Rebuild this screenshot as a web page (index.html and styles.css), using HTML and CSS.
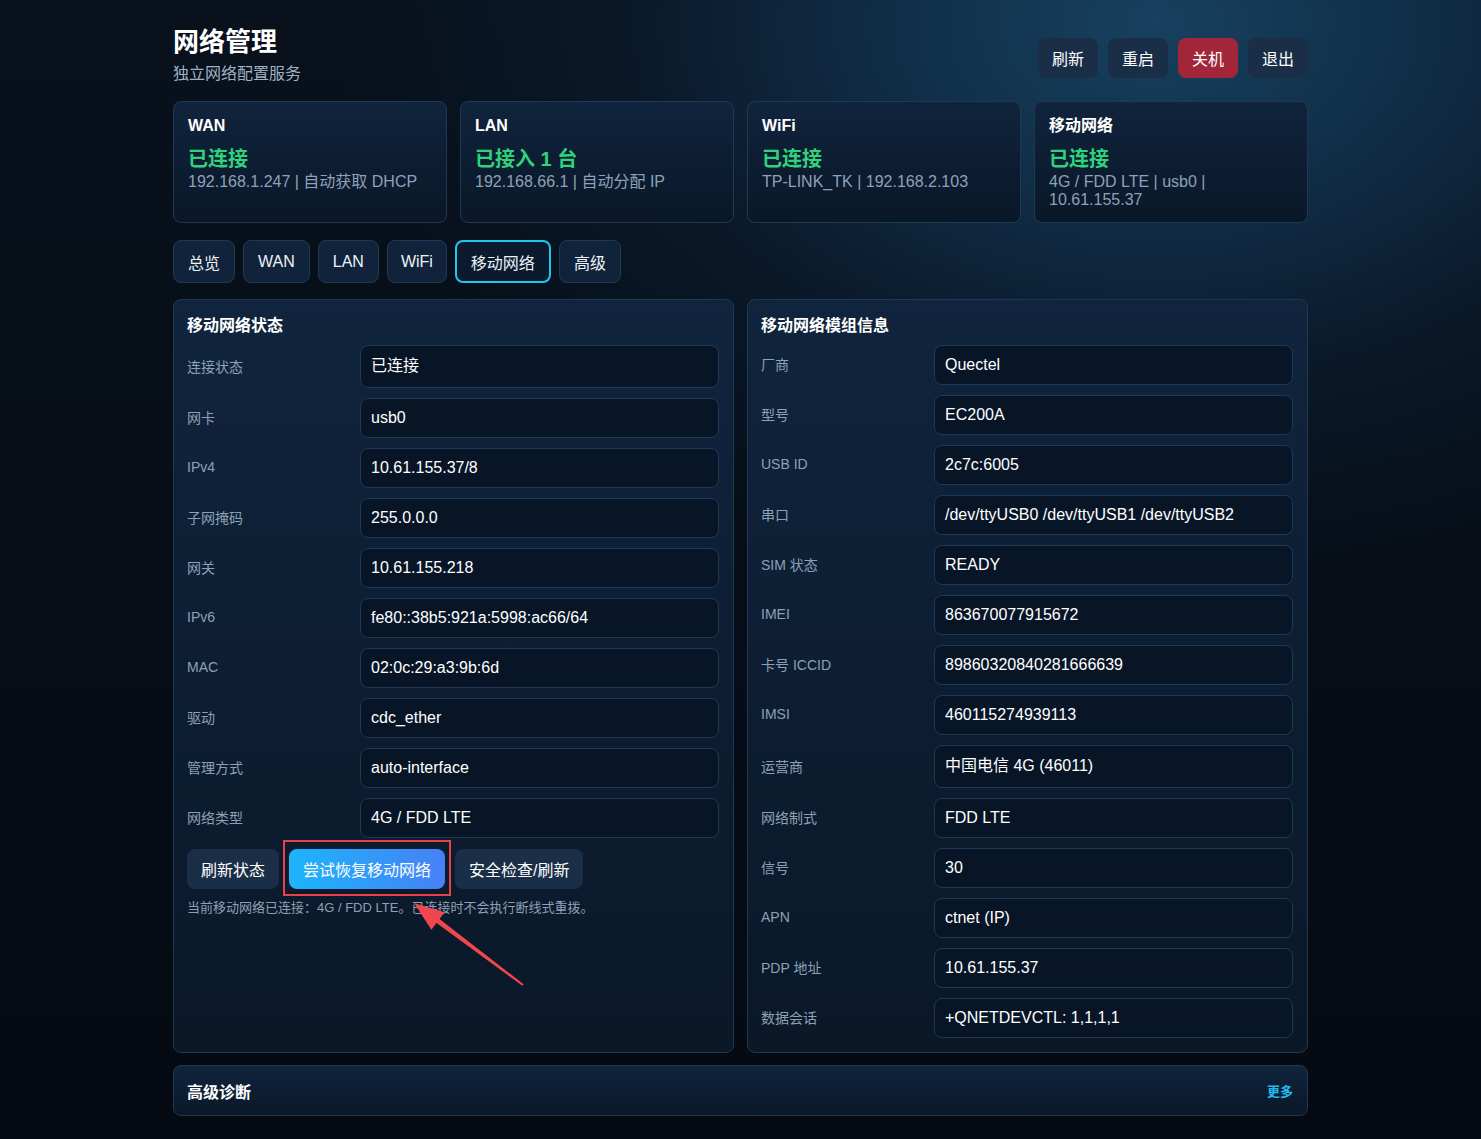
FILE: index.html
```html
<!DOCTYPE html>
<html lang="zh-CN">
<head>
<meta charset="utf-8">
<title>网络管理</title>
<link rel="stylesheet" href="styles.css">
</head>
<body>
<div class="page">
  <header class="header">
    <div class="brand">
      <h1 class="title">网络管理</h1>
      <div class="subtitle">独立网络配置服务</div>
    </div>
    <div class="actions">
      <button class="hbtn">刷新</button>
      <button class="hbtn">重启</button>
      <button class="hbtn danger">关机</button>
      <button class="hbtn">退出</button>
    </div>
  </header>

  <section class="cards">
    <div class="card">
      <div class="card-title">WAN</div>
      <div class="card-status">已连接</div>
      <div class="card-detail">192.168.1.247 | 自动获取 DHCP</div>
    </div>
    <div class="card">
      <div class="card-title">LAN</div>
      <div class="card-status">已接入 1 台</div>
      <div class="card-detail">192.168.66.1 | 自动分配 IP</div>
    </div>
    <div class="card">
      <div class="card-title">WiFi</div>
      <div class="card-status">已连接</div>
      <div class="card-detail">TP-LINK_TK | 192.168.2.103</div>
    </div>
    <div class="card">
      <div class="card-title">移动网络</div>
      <div class="card-status">已连接</div>
      <div class="card-detail">4G / FDD LTE | usb0 |<br>10.61.155.37</div>
    </div>
  </section>

  <nav class="tabs">
    <button class="tab">总览</button>
    <button class="tab">WAN</button>
    <button class="tab">LAN</button>
    <button class="tab narrow">WiFi</button>
    <button class="tab active">移动网络</button>
    <button class="tab">高级</button>
  </nav>

  <section class="panels">
    <div class="panel left-panel">
      <h2 class="panel-title">移动网络状态</h2>
      <div class="rows">
        <div class="row"><div class="label">连接状态</div><div class="value cjk">已连接</div></div>
        <div class="row"><div class="label">网卡</div><div class="value">usb0</div></div>
        <div class="row"><div class="label">IPv4</div><div class="value">10.61.155.37/8</div></div>
        <div class="row"><div class="label">子网掩码</div><div class="value">255.0.0.0</div></div>
        <div class="row"><div class="label">网关</div><div class="value">10.61.155.218</div></div>
        <div class="row"><div class="label">IPv6</div><div class="value">fe80::38b5:921a:5998:ac66/64</div></div>
        <div class="row"><div class="label">MAC</div><div class="value">02:0c:29:a3:9b:6d</div></div>
        <div class="row"><div class="label">驱动</div><div class="value">cdc_ether</div></div>
        <div class="row"><div class="label">管理方式</div><div class="value">auto-interface</div></div>
        <div class="row"><div class="label">网络类型</div><div class="value">4G / FDD LTE</div></div>
      </div>
      <div class="btn-row">
        <button class="pbtn">刷新状态</button>
        <span class="highlight">
          <button class="pbtn primary">尝试恢复移动网络</button>
          <span class="mark"></span>
        </span>
        <button class="pbtn">安全检查/刷新</button>
      </div>
      <p class="hint">当前移动网络已连接：4G / FDD LTE。已连接时不会执行断线式重拨。</p>
      <svg class="arrow" width="130" height="100" viewBox="400 895 130 100">
        <polygon points="437.9,917.8 523.6,984.2 522.4,985.8 434.9,921.8" fill="#f0474f"/>
        <polygon points="414,903 444.6,912.2 431.4,929.8" fill="#f0474f"/>
      </svg>
    </div>

    <div class="panel">
      <h2 class="panel-title">移动网络模组信息</h2>
      <div class="rows">
        <div class="row"><div class="label">厂商</div><div class="value">Quectel</div></div>
        <div class="row"><div class="label">型号</div><div class="value">EC200A</div></div>
        <div class="row"><div class="label">USB ID</div><div class="value">2c7c:6005</div></div>
        <div class="row"><div class="label">串口</div><div class="value">/dev/ttyUSB0 /dev/ttyUSB1 /dev/ttyUSB2</div></div>
        <div class="row"><div class="label">SIM 状态</div><div class="value">READY</div></div>
        <div class="row"><div class="label">IMEI</div><div class="value">863670077915672</div></div>
        <div class="row"><div class="label">卡号 ICCID</div><div class="value">89860320840281666639</div></div>
        <div class="row"><div class="label">IMSI</div><div class="value">460115274939113</div></div>
        <div class="row"><div class="label">运营商</div><div class="value cjk">中国电信 4G (46011)</div></div>
        <div class="row"><div class="label">网络制式</div><div class="value">FDD LTE</div></div>
        <div class="row"><div class="label">信号</div><div class="value">30</div></div>
        <div class="row"><div class="label">APN</div><div class="value">ctnet (IP)</div></div>
        <div class="row"><div class="label">PDP 地址</div><div class="value">10.61.155.37</div></div>
        <div class="row"><div class="label">数据会话</div><div class="value">+QNETDEVCTL: 1,1,1,1</div></div>
      </div>
    </div>
  </section>

  <section class="diag">
    <h2 class="diag-title">高级诊断</h2>
    <a class="more">更多</a>
  </section>
</div>
</body>
</html>
```

FILE: styles.css
```css
* { box-sizing: border-box; }

html, body {
  margin: 0;
  padding: 0;
  height: 100%;
}

body {
  font-family: "Liberation Sans", "Noto Sans CJK SC", sans-serif;
  color: #eef3f8;
  background-color: #050a12;
  background-image:
    radial-gradient(ellipse 820px 560px at 78% 2%, #17415f 0%, #102c45 35%, #0a1828 65%, rgba(6, 12, 21, 0) 100%),
    linear-gradient(180deg, #08111c 0%, #050a12 100%);
  background-repeat: no-repeat;
  overflow: hidden;
}

.page {
  width: 1135px;
  margin: 0 auto;
  padding-top: 25px;
}

button {
  font-family: inherit;
  cursor: pointer;
}

/* header */
.header {
  display: flex;
  justify-content: space-between;
  align-items: flex-start;
}

.title {
  margin: 0;
  font-size: 26px;
  font-weight: 700;
  line-height: 34px;
  color: #ffffff;
}

.subtitle {
  margin-top: 4px;
  font-size: 16px;
  line-height: 22px;
  color: #9fb1c4;
}

.actions {
  display: flex;
  gap: 10px;
  margin-top: 13px;
}

.hbtn {
  width: 60px;
  height: 40px;
  border: none;
  border-radius: 8px;
  background: #1a2e48;
  color: #ffffff;
  font-size: 16px;
}

.hbtn.danger {
  background: #a2263a;
}

/* status cards */
.cards {
  display: grid;
  grid-template-columns: repeat(4, 1fr);
  gap: 13px;
  margin-top: 16px;
}

.card {
  min-height: 122px;
  padding: 13px 14px;
  border: 1px solid #1f3853;
  border-radius: 8px;
  background: linear-gradient(180deg, #10243d 0%, #0a1728 100%);
}

.card-title {
  font-size: 16px;
  font-weight: 700;
  line-height: 22px;
  color: #ffffff;
}

.card-status {
  margin-top: 10px;
  font-size: 20px;
  font-weight: 700;
  line-height: 24px;
  color: #2fd37c;
}

.card-detail {
  margin-top: 2px;
  font-size: 16px;
  line-height: 18px;
  color: #8da2b8;
}

/* tabs */
.tabs {
  display: flex;
  gap: 8px;
  margin-top: 17px;
}

.tab {
  height: 43px;
  padding: 0 14px;
  border: 1px solid #203a55;
  border-radius: 8px;
  background: #11233a;
  color: #edf2f8;
  font-size: 16px;
}

.tab.narrow {
  padding: 0 13px;
}

.tab.active {
  border: 2px solid #1fc6ef;
  padding: 0 14px;
  background: #0b1a2c;
}

/* panels */
.panels {
  display: grid;
  grid-template-columns: 1fr 1fr;
  gap: 13px;
  margin-top: 16px;
}

.panel {
  position: relative;
  padding: 15px 14px 14px 13px;
  border: 1px solid #1f3853;
  border-radius: 8px;
  background: linear-gradient(180deg, #10243d 0%, #0a1828 100%);
}

.panel-title {
  margin: 0 0 8px;
  font-size: 16px;
  font-weight: 700;
  line-height: 22px;
  color: #ffffff;
}

.rows {
  display: flex;
  flex-direction: column;
  gap: 10px;
}

.row {
  display: grid;
  grid-template-columns: 173px 1fr;
  align-items: center;
}

.label {
  font-size: 14px;
  color: #8ca1b6;
  padding-bottom: 2px;
}

.value {
  padding: 10px 10px;
  border: 1px solid #1f3853;
  border-radius: 8px;
  background: #081527;
  font-size: 16px;
  line-height: 18px;
  color: #ffffff;
}

.value.cjk {
  padding-top: 11px;
  padding-bottom: 12px;
}

/* left panel actions */
.btn-row {
  display: flex;
  align-items: center;
  gap: 10px;
  margin-top: 11px;
}

.pbtn {
  height: 40px;
  padding: 0 14px;
  border: none;
  border-radius: 8px;
  background: #1a2e48;
  color: #ffffff;
  font-size: 16px;
}

.pbtn.primary {
  padding: 0 14px;
  background: linear-gradient(90deg, #1cb5fb 0%, #4780f6 100%);
}

.highlight {
  position: relative;
  display: inline-flex;
}

.mark {
  position: absolute;
  left: -6px;
  right: -6px;
  top: -9px;
  bottom: -7px;
  border: 2px solid #e8414a;
  pointer-events: none;
}

.hint {
  margin: 11px 0 0;
  font-size: 13px;
  line-height: 16px;
  color: #8ca1b6;
}

.arrow {
  position: absolute;
  left: 226px;
  top: 595px;
  overflow: visible;
}

/* advanced diagnostics */
.diag {
  display: flex;
  justify-content: space-between;
  align-items: center;
  height: 51px;
  margin-top: 12px;
  padding: 0 14px 0 13px;
  border: 1px solid #1f3853;
  border-radius: 8px;
  background: linear-gradient(180deg, #10243d 0%, #0a1828 100%);
}

.diag-title {
  margin: 0;
  font-size: 16px;
  font-weight: 700;
  color: #ffffff;
}

.more {
  font-size: 13px;
  font-weight: 700;
  color: #24b9f2;
}
```
